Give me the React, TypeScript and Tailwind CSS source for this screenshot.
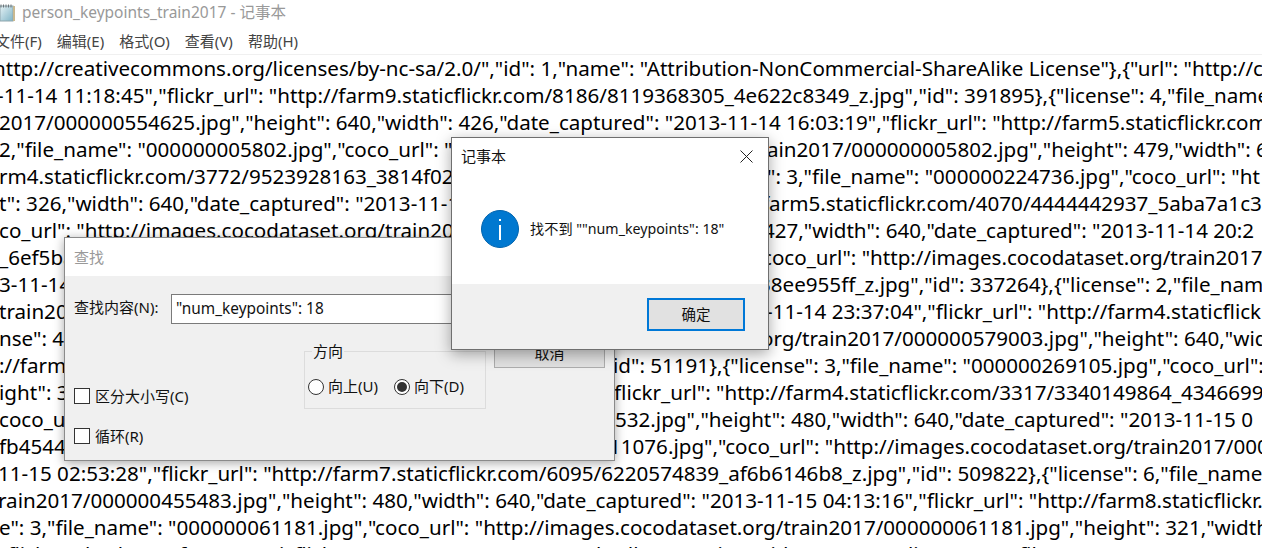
import React from 'react';

const UI_FONT = "font-['Noto_Sans','Noto_Sans_CJK_SC',sans-serif]";

// lines of the file, split where a dialog hides the middle of the row
const LINES = [
  { cls: 'ml-[-7px]', a: 'http://creativecommons.org/licenses/by-nc-sa/2.0/","id": 1,"name": "Attribution-NonCommercial-ShareAlike License"},{"url": "http://c', w: '', b: '' },
  { cls: 'ml-[-3px]', a: '-11-14 11:18:45","flickr_url": "http://farm9.staticflickr.com/8186/8119368305_4e622c8349_z.jpg","id": 391895},{"license": 4,"file_name', w: '', b: '' },
  { cls: 'ml-[-1px]', a: '2017/000000554625.jpg","height": 640,"width": 426,"date_captured": "2013-11-14 16:03:19","flickr_url": "http://farm5.staticflickr.com', w: '', b: '' },
  { cls: 'ml-[-1px]', a: '2,"file_name": "000000005802.jpg","coco_url": "http://images', w: 'w-[768px]', b: 'ain2017/000000005802.jpg","height": 479,"width": 6' },
  { cls: 'ml-[-1px]', a: 'rm4.staticflickr.com/3772/9523928163_3814f02ee', w: 'w-[768px]', b: '": 3,"file_name": "000000224736.jpg","coco_url": "ht' },
  { cls: 'ml-[-1px]', a: 't": 326,"width": 640,"date_captured": "2013-11-14', w: 'w-[763px]', b: 'farm5.staticflickr.com/4070/4444442937_5aba7a1c3' },
  { cls: 'ml-[-1px]', a: 'co_url": "http://images.cocodataset.org/train2017', w: 'w-[764px]', b: '427,"width": 640,"date_captured": "2013-11-14 20:2' },
  { cls: 'ml-[-1px]', a: '_6ef5ba', w: 'w-[763px]', b: 'coco_url": "http://images.cocodataset.org/train2017/' },
  { cls: 'ml-[-1px]', a: '3-11-14', w: 'w-[760px]', b: '38ee955ff_z.jpg","id": 337264},{"license": 2,"file_nam' },
  { cls: 'ml-[-1px]', a: 'train20', w: 'w-[767px]', b: '-11-14 23:37:04","flickr_url": "http://farm4.staticflick' },
  { cls: 'ml-[-1px]', a: 'nse": 4,', w: 'w-[762px]', b: 'org/train2017/000000579003.jpg","height": 640,"wid' },
  { cls: 'ml-[-1px]', a: '://farm', w: 'w-[614px]', b: 'id": 51191},{"license": 3,"file_name": "000000269105.jpg","coco_url":' },
  { cls: 'ml-[-1px]', a: 'ight": 3', w: 'w-[615px]', b: 'flickr_url": "http://farm4.staticflickr.com/3317/3340149864_4346699' },
  { cls: 'ml-[-1px]', a: 'coco_u', w: 'w-[616px]', b: '532.jpg","height": 480,"width": 640,"date_captured": "2013-11-15 0' },
  { cls: 'ml-[-1px]', a: 'fb4544', w: 'w-[610px]', b: '11076.jpg","coco_url": "http://images.cocodataset.org/train2017/000' },
  { cls: 'ml-[-2px]', a: '11-15 02:53:28","flickr_url": "http://farm7.staticflickr.com/6095/6220574839_af6b6146b8_z.jpg","id": 509822},{"license": 6,"file_name', w: '', b: '' },
  { cls: 'ml-[-2px]', a: 'rain2017/000000455483.jpg","height": 480,"width": 640,"date_captured": "2013-11-15 04:13:16","flickr_url": "http://farm8.staticflickr.', w: '', b: '' },
  { cls: 'ml-[-1px]', a: 'e": 3,"file_name": "000000061181.jpg","coco_url": "http://images.cocodataset.org/train2017/000000061181.jpg","height": 321,"width', w: '', b: '' },
  { cls: 'ml-[-1px]', a: '"flickr_url": "http://farm4.staticflickr.com/1050/1103641942_9ch4dh4225_z.jpg","id": 336781},{"license": 3,"file_name": "000000067000.jpg"', w: '', b: '' },
];

const MENUS = ['文件(F)', '编辑(E)', '格式(O)', '查看(V)', '帮助(H)'];

const NotepadIcon = () => (
  <svg width="17" height="19" viewBox="0 0 17 19" className="ml-[-1px] shrink-0">
    <defs>
      <linearGradient id="page" x1="0" y1="0" x2="1" y2="1">
        <stop offset="0" stopColor="#e6f2f5" />
        <stop offset="1" stopColor="#7fb4c6" />
      </linearGradient>
    </defs>
    <rect x="1" y="3" width="13" height="15" fill="url(#page)" stroke="#8fa6ad" strokeWidth="1" />
    <rect x="14" y="3" width="2" height="15" fill="#c9b88f" />
    <path d="M2 1.5v3 M4.5 1.5v3 M7 1.5v3 M9.5 1.5v3 M12 1.5v3" stroke="#6d7478" strokeWidth="1" />
  </svg>
);

const Radio = ({ label, checked }: { label: string; checked?: boolean }) => (
  <div className="flex items-center gap-[4px]">
    <div className="w-4 h-4 rounded-full border border-[#333] bg-white flex items-center justify-center">
      {checked && <div className="w-[10px] h-[10px] rounded-full bg-[#333]"></div>}
    </div>
    <span>{label}</span>
  </div>
);

const Check = ({ label }: { label: string }) => (
  <div className="flex items-center gap-[5px] h-4">
    <div className="w-4 h-4 border border-[#333] bg-white"></div>
    <span>{label}</span>
  </div>
);

export default function App() {
  return (
    <div className={`relative w-[1262px] h-[548px] overflow-hidden bg-white text-black ${UI_FONT}`}>
      <div className="flex items-center h-[25px] gap-[6px] text-[15.5px] text-[#999]">
        <NotepadIcon />
        <span>person_keypoints_train2017 - 记事本</span>
      </div>
      <div className="flex items-center h-[30px] pt-[4px] border-b border-[#f0f0f0] ml-[-5px] gap-[15px] text-[15px] text-[#444]">
        {MENUS.map(m => (
          <span key={m}>{m}</span>
        ))}
      </div>

      <div className="text-[20.6px] leading-[27px] whitespace-nowrap">
        {LINES.map((l, i) => (
          <div key={i} className={`flex h-[27px] ${l.cls}`}>
            <span className={`shrink-0 ${l.w}`}>{l.a}</span>
            <span className="shrink-0">{l.b}</span>
          </div>
        ))}
      </div>

      {/* find dialog */}
      <div className="absolute left-[64px] top-[237px] w-[551px] h-[224px] border border-[#8a8a8a] bg-[#f0f0f0] text-[15px] text-[#111] shadow-[0_2px_10px_rgba(0,0,0,0.35)] flex flex-col">
        <div className="h-[38px] bg-white flex items-center pl-[9px] text-[#999] shrink-0">查找</div>
        <div className="flex items-start pl-[9px] pt-[18px]">
          <span className="w-[97px] h-[30px] pb-[3px] flex items-center">查找内容(N):</span>
          <div className="w-[310px] h-[30px] border border-[#7a7a7a] bg-white flex items-center pl-[4px] whitespace-nowrap text-[15.4px]">"num_keypoints": 18</div>
        </div>
        <div className="flex pl-[9px] pt-[27px]">
          <div className="w-[230px] pt-[37px] flex flex-col gap-[24px]">
            <Check label="区分大小写(C)" />
            <Check label="循环(R)" />
          </div>
          <div className="relative w-[182px] h-[58px] border border-[#dcdcdc] flex items-center gap-[16px] pl-[3px] pt-[13px]">
            <span className="absolute left-[7px] top-[-12px] bg-[#f0f0f0] px-[1px]">方向</span>
            <Radio label="向上(U)" />
            <Radio label="向下(D)" checked />
          </div>
          <div className="w-[111px] h-[30px] ml-[8px] mt-[-13px] border border-[#adadad] bg-[#e1e1e1] flex items-center justify-center">取消</div>
        </div>
      </div>

      {/* message box */}
      <div className="absolute left-[451px] top-[137px] w-[318px] h-[213px] border border-[#6f6f6f] bg-white text-[14.5px] text-[#111] shadow-[0_4px_14px_rgba(0,0,0,0.35)] flex flex-col">
        <div className="flex items-center justify-between h-[36px] pl-[9px] pr-[15px]">
          <span className="text-[15px]">记事本</span>
          <svg width="13" height="13" viewBox="0 0 13 13" stroke="#222" strokeWidth="1">
            <path d="M0.5 0.5 L12.5 12.5 M12.5 0.5 L0.5 12.5" />
          </svg>
        </div>
        <div className="h-[110px] flex items-center pl-[29px] gap-[11px]">
          <svg width="38" height="38" viewBox="0 0 38 38" className="shrink-0">
            <circle cx="19" cy="19" r="18.5" fill="#0078d0" stroke="#0063ad" strokeWidth="1" />
            <rect x="18" y="15" width="2" height="15" fill="#fff" />
            <rect x="18" y="9" width="2" height="2" fill="#fff" />
          </svg>
          <span className="text-[14.2px] whitespace-nowrap">找不到 ""num_keypoints": 18"</span>
        </div>
        <div className="flex-1 bg-[#f0f0f0] flex justify-end items-start pt-[14px] pr-[23px]">
          <div className="w-[98px] h-[33px] border-2 border-[#0078d7] bg-[#e1e1e1] flex items-center justify-center">确定</div>
        </div>
      </div>
    </div>
  );
}
